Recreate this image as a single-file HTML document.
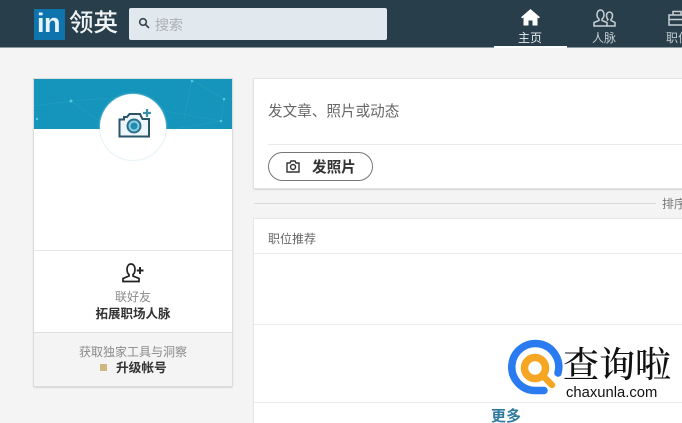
<!DOCTYPE html>
<html><head><meta charset="utf-8">
<style>
html,body{margin:0;padding:0;width:682px;height:423px;overflow:hidden}
#w{width:682px;height:423px;overflow:hidden;background:#f4f4f4;position:relative;font-family:"Liberation Sans","Noto Sans CJK SC",sans-serif;color:#333;filter:blur(.35px)}
.a{position:absolute;white-space:nowrap}
svg{position:absolute;overflow:visible}
</style></head><body><div id="w">
<div class="a" style="left:0;top:0;width:682px;height:47px;background:#283e4a;border-bottom:1px solid #8d9aa2"></div>
<div class="a" style="left:34px;top:9px;width:31px;height:31px;background:#0f74ae"></div>
<div class="a" style="left:37px;top:8px;font:bold 27px/31px 'Liberation Sans';color:#e6f3f9;letter-spacing:-.5px">in</div>
<div class="a" style="left:69px;top:9px;font-size:24.500px;line-height:30px;font-weight:500;color:#f1f4f5">领英</div>
<div class="a" style="left:129px;top:8px;width:258px;height:32px;background:#e1e8ee;border-radius:2px"></div>
<svg style="left:138px;top:17px" width="13" height="13" viewBox="0 0 13 13" fill="none" stroke="#34444e" stroke-width="1.600"><circle cx="5" cy="5" r="3.300"/><path d="M7.500 7.500L11 11"/></svg>
<div class="a" style="left:155px;top:16px;font-size:14px;line-height:19px;color:#a9b0b5">搜索</div>

<svg style="left:521px;top:9px" width="19" height="17" viewBox="0 0 19 17"><path fill="#fff" d="M9.500 0L19 8.200 17.800 9.400 16.500 8.400V16.500H11.500V11.500H7.500V16.500H2.500V8.400L1.200 9.400 0 8.200Z"/></svg>
<div class="a" style="left:518px;top:30px;font-size:12px;line-height:16px;color:#e8ecee">主页</div>
<div class="a" style="left:494px;top:46px;width:73px;height:2px;background:#fff"></div>
<svg style="left:592px;top:9px" width="24" height="18" viewBox="0 0 24 18" fill="none" stroke="#c8d0d5" stroke-width="1.500"><path d="M2 17V13.500L7 11.500V10C5.500 9 5 7.500 5 5.500 5 3 6.500 1 8.500 1S12 3 12 5.500C12 7.500 11.500 9 10 10V11.500L15 13.500V17Z"/><path d="M15 11.500L16 10.500C15 9.500 14.500 8 14.500 6.500 14.500 4.500 15.800 3 17.500 3S20.500 4.500 20.500 6.500C20.500 8 20 9.500 19 10.500V11.500L23 13.500V17H15"/></svg>
<div class="a" style="left:592px;top:30px;font-size:12px;line-height:16px;color:#c2cbd0">人脉</div>
<svg style="left:668px;top:10px" width="16" height="16" viewBox="0 0 16 16" fill="none" stroke="#c8d0d5" stroke-width="1.500"><path d="M1 5H20V15H1ZM1 9.500H20M5 5V1.500H13V5"/></svg>
<div class="a" style="left:666px;top:30px;font-size:12px;line-height:16px;color:#c2cbd0">职位</div>

<div class="a" style="left:34px;top:79px;width:198px;height:307px;background:#fff;box-shadow:0 0 0 1px #dcdcdc,0 1px 2px #aaa"></div>
<div class="a" style="left:34px;top:79px;width:198px;height:50px;background:#1595bb"></div>
<svg style="left:34px;top:79px" width="198" height="50" fill="none" stroke="#25a0c1" stroke-width=".6"><path d="M0 27L37 22 70 45M37 22L90 18M158 1L190 20 187 42 140 50M158 1L150 40M120 30L187 42"/><g fill="#5cc6de" stroke="none"><circle cx="158" cy="2" r="1.300"/><circle cx="190" cy="20" r="1.300"/><circle cx="187" cy="42" r="1.300"/><circle cx="37" cy="22" r="1.500"/><circle cx="3" cy="40" r="1.200"/></g></svg>
<div class="a" style="left:100px;top:94px;width:66px;height:66px;border-radius:50%;background:#fff;box-shadow:0 0 2px #b9dde8"></div>
<svg style="left:118px;top:108px" width="34" height="30" viewBox="0 0 34 30" fill="none"><path d="M1.500 11.500H6V9H9L11.500 6H22L24.500 11H31V28.500H1.500Z" fill="#eef6f9" stroke="#2a5468" stroke-width="2"/><circle cx="16" cy="18" r="6.500" fill="#8ccde0" stroke="#2a6f8d" stroke-width="2"/><circle cx="16" cy="18" r="3.500" fill="#1f8db2"/><path d="M29 1V9M25 5H33" stroke="#3d8ea8" stroke-width="2.200"/></svg>
<div class="a" style="left:34px;top:250px;width:198px;height:1px;background:#e6e6e6"></div>
<svg style="left:122px;top:263px" width="24" height="20" viewBox="0 0 24 20" fill="none" stroke="#222" stroke-width="1.700"><path d="M1 18.500V15.500L7 13V11.500C5.500 10.500 5 8.500 5 6 5 3 6.800 1 9 1S13 3 13 6C13 8.500 12.500 10.500 11 11.500V13L17 15.500V18.500Z"/><path d="M18 4V11M14.800 7.500H21.500" stroke-width="1.900"/></svg>
<div class="a" style="left:34px;width:198px;text-align:center;top:289px;font-size:12px;line-height:17px;color:#8a8a8a">联好友</div>
<div class="a" style="left:34px;width:198px;text-align:center;top:306px;font-size:12.500px;line-height:17px;font-weight:bold;color:#333">拓展职场人脉</div>
<div class="a" style="left:34px;top:332px;width:198px;height:54px;background:#f4f4f4;border-top:1px solid #dedede;box-sizing:border-box"></div>
<div class="a" style="left:34px;width:198px;text-align:center;top:344px;font-size:12px;line-height:17px;color:#8a8a8a">获取独家工具与洞察</div>
<div class="a" style="left:100px;top:364px;width:7px;height:7px;background:#cdb87f"></div>
<div class="a" style="left:116px;top:360px;font-size:12.700px;line-height:17px;font-weight:bold;color:#333">升级帐号</div>

<div class="a" style="left:254px;top:79px;width:440px;height:109px;background:#fff;box-shadow:0 0 0 1px #e2e2e2,0 1px 2px #aaa"></div>
<div class="a" style="left:268px;top:103px;font-size:14.600px;line-height:19px;color:#666">发文章、照片或动态</div>
<div class="a" style="left:268px;top:144px;width:414px;height:1px;background:#ebebeb"></div>
<div class="a" style="left:268px;top:152px;width:105px;height:29px;box-sizing:border-box;border:1px solid #777;border-radius:15px;background:#fff"></div>
<svg style="left:286px;top:160px" width="14" height="13" viewBox="0 0 14 13" fill="none" stroke="#333" stroke-width="1.400"><path d="M1 3H4L5 1H9L10 3H13V12H1Z"/><circle cx="7" cy="7" r="2.500"/></svg>
<div class="a" style="left:312px;top:158px;font-size:14.600px;line-height:20px;font-weight:bold;color:#333">发照片</div>

<div class="a" style="left:254px;top:203px;width:402px;height:1px;background:#d9d9d9"></div>
<div class="a" style="left:662px;top:196px;font-size:12px;line-height:17px;color:#777">排序</div>

<div class="a" style="left:254px;top:219px;width:440px;height:220px;background:#fff;box-shadow:0 0 0 1px #e6e6e6"></div>
<div class="a" style="left:268px;top:231px;font-size:12px;line-height:17px;color:#666">职位推荐</div>
<div class="a" style="left:254px;top:253px;width:428px;height:1px;background:#ececec"></div>
<div class="a" style="left:254px;top:324px;width:428px;height:1px;background:#ececec"></div>
<div class="a" style="left:254px;top:402px;width:428px;height:1px;background:#ececec"></div>
<div class="a" style="left:491px;top:407px;font-size:15px;line-height:20px;font-weight:bold;color:#2d7a9e">更多</div>

<svg style="left:506px;top:338px" width="60" height="60" viewBox="0 0 60 60" fill="none"><path d="M52 35A23.500 23.500 0 1 0 29 52.500L38 52.500" stroke="#2a7bf0" stroke-width="7.500" stroke-linecap="round"/><circle cx="29" cy="30" r="10.500" stroke="#f5a623" stroke-width="7.500"/><path d="M38 39L46 47" stroke="#f5a623" stroke-width="6.500" stroke-linecap="round"/></svg>
<div class="a" style="left:563px;top:338px;font-family:'Noto Serif CJK SC',serif;font-size:36px;line-height:50px;color:#111;font-weight:500">查询啦</div>
<div class="a" style="left:566px;top:383px;font:14.800px/20px 'Liberation Sans',sans-serif;color:#111">chaxunla.com</div>
</div></body></html>
